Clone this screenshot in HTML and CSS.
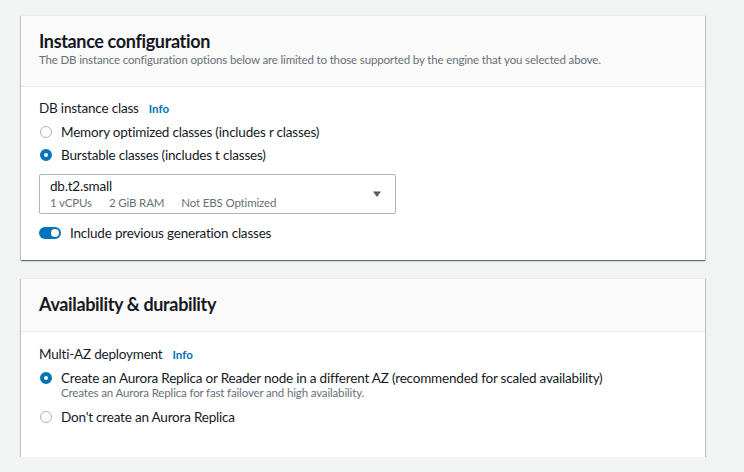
FILE: index.html
```html
<!DOCTYPE html>
<html lang="en">
<head>
<meta charset="utf-8">
<title>Instance configuration</title>
<link rel="stylesheet" href="styles.css">
</head>
<body>
<main class="page">
  <section class="card">
    <header class="card-header">
      <h2 class="card-title">Instance configuration</h2>
      <p class="card-desc">The DB instance configuration options below are limited to those supported by the engine that you selected above.</p>
    </header>
    <div class="card-body">
      <div class="field-label">DB instance class <a class="info">Info</a></div>
      <div class="radio-group">
        <label class="radio-row"><span class="radio"></span><span class="radio-text">Memory optimized classes (includes r classes)</span></label>
        <label class="radio-row"><span class="radio checked"></span><span class="radio-text">Burstable classes (includes t classes)</span></label>
      </div>
      <div class="select">
        <div class="select-value">
          <div class="select-main">db.t2.small</div>
          <div class="select-tags"><span>1 vCPUs</span><span>2 GiB RAM</span><span>Not EBS Optimized</span></div>
        </div>
        <svg class="caret" width="10" height="7" viewBox="0 0 10 7"><path d="M1 0.5h8L5 6z" fill="#545b64"/></svg>
      </div>
      <label class="toggle-row"><span class="toggle"><span class="knob"></span></span><span class="toggle-text">Include previous generation classes</span></label>
    </div>
  </section>

  <section class="card">
    <header class="card-header compact">
      <h2 class="card-title">Availability &amp; durability</h2>
    </header>
    <div class="card-body body2">
      <div class="field-label">Multi-AZ deployment <a class="info">Info</a></div>
      <div class="radio-group">
        <label class="radio-row"><span class="radio checked"></span><span class="radio-text">Create an Aurora Replica or Reader node in a different AZ (recommended for scaled availability)<span class="radio-desc">Creates an Aurora Replica for fast failover and high availability.</span></span></label>
        <label class="radio-row"><span class="radio"></span><span class="radio-text">Don't create an Aurora Replica</span></label>
      </div>
    </div>
  </section>
</main>
</body>
</html>
```
FILE: styles.css
```css
html, body { margin: 0; padding: 0; }
body {
  background: #f2f3f3;
  font-family: "Lato", "Noto Sans", sans-serif;
  color: #16191f;
  font-size: 13.5px;
  letter-spacing: -0.2px;
}
.page {
  padding: 15px 39px 0 21px;
  display: flex;
  flex-direction: column;
  gap: 18px;
}
.card {
  background: #fff;
  border-top: 1px solid #eaeded;
  box-shadow: 0 1px 1px 0 rgba(0,28,36,0.45), 1px 1px 1px 0 rgba(0,28,36,0.15), -1px 1px 1px 0 rgba(0,28,36,0.15);
}
.card-header {
  background: #fafafa;
  border-bottom: 1px solid #eaeded;
  padding: 14px 20px 18px 18px;
}
.card-header.compact { padding-bottom: 16px; }
.card-title {
  margin: 0;
  font-size: 18px;
  line-height: 22px;
  font-weight: 700;
  letter-spacing: -0.35px;
}
.card-desc {
  margin: 0;
  font-size: 11.5px;
  line-height: 16px;
  letter-spacing: -0.15px;
  color: #687078;
}
.card-body {
  padding: 11px 20px 17px 18px;
}
.card-body.body2 { padding-top: 12px; padding-bottom: 30px; }
.field-label {
  line-height: 20px;
  display: flex;
  align-items: baseline;
  gap: 10px;
}
.info {
  color: #0073bb;
  font-weight: 700;
  font-size: 11.5px;
  letter-spacing: 0;
}
.radio-group {
  display: flex;
  flex-direction: column;
  gap: 3px;
  margin-top: 3px;
}
.body2 .radio-group { gap: 7px; }
.radio-row {
  display: flex;
  align-items: flex-start;
  gap: 9px;
  line-height: 20px;
  padding-left: 1px;
}
.radio {
  flex: none;
  width: 12px;
  height: 12px;
  margin-top: 4px;
  border-radius: 50%;
  border: 1.5px solid #aab7b8;
  box-sizing: border-box;
  background: #fff;
}
.radio.checked {
  border: 4px solid #0073bb;
}
.radio-text { display: flex; flex-direction: column; }
.radio-desc {
  margin-top: -2px;
  font-size: 11.5px;
  line-height: 14px;
  color: #687078;
  letter-spacing: -0.15px;
}
.select {
  margin-top: 9px;
  width: 357px;
  height: 40px;
  box-sizing: border-box;
  border: 1px solid #aab7b8;
  border-radius: 2px;
  display: flex;
  align-items: center;
  justify-content: space-between;
  padding: 0 13px 0 10px;
}
.select-main { line-height: 17px; }
.select-tags {
  font-size: 11.5px;
  line-height: 15px;
  color: #687078;
  letter-spacing: -0.15px;
  display: flex;
  gap: 17px;
}
.caret { display: block; }
.toggle-row {
  display: flex;
  align-items: center;
  gap: 9px;
  margin-top: 9px;
  line-height: 20px;
}
.toggle {
  flex: none;
  width: 22px;
  height: 12px;
  border-radius: 6px;
  background: #0073bb;
  display: flex;
  align-items: center;
  justify-content: flex-end;
  padding: 0 2px;
  box-sizing: border-box;
}
.knob {
  width: 8px;
  height: 8px;
  border-radius: 50%;
  background: #fff;
}
```
